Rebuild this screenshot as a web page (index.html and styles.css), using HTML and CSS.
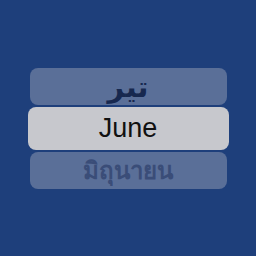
FILE: index.html
```html
<!DOCTYPE html>
<html>
<head>
<meta charset="utf-8">
<link rel="stylesheet" href="styles.css">
</head>
<body>
<div class="picker">
  <div class="row side top" lang="fa" dir="rtl">تير</div>
  <div class="row current">June</div>
  <div class="row side bottom" lang="th">มิถุนายน</div>
</div>
</body>
</html>
```

FILE: styles.css
```css
html, body {
  margin: 0;
  padding: 0;
}
body {
  width: 256px;
  height: 256px;
  background: #1e3f7b;
  display: flex;
  align-items: center;
  justify-content: center;
  font-family: "Liberation Sans", "DejaVu Sans", sans-serif;
}
.picker {
  display: flex;
  flex-direction: column;
  align-items: center;
  gap: 2px;
}
.row {
  display: flex;
  align-items: center;
  justify-content: center;
  border-radius: 8px;
}
.side {
  width: 197px;
  height: 37px;
  background: #5a6f98;
}
.top {
  color: #17284f;
  font-family: "DejaVu Sans", sans-serif;
  font-weight: bold;
  font-size: 29px;
  padding-top: 2px;
  box-sizing: border-box;
}
.current {
  width: 201px;
  height: 43px;
  background: #c7c8cd;
  color: #111111;
  font-size: 27px;
}
.bottom {
  color: #3a4d78;
  font-weight: bold;
  font-size: 24px;
}
```
